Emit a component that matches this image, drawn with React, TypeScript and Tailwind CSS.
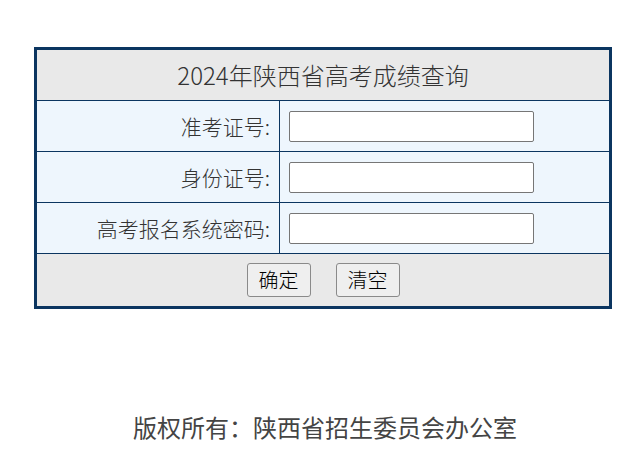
import React from "react";

export default function App() {
  /* ----- lomakkeen rivit ----- */
  const rivit = [
    { id: "zkzh", label: "准考证号:" },
    { id: "sfzh", label: "身份证号:" },
    { id: "mm", label: "高考报名系统密码:" },
  ];

  return (
    <div
      className="w-[640px] h-[475px] bg-white text-[#333]"
      style={{ fontFamily: '"Noto Sans CJK SC", "Noto Sans", sans-serif' }}
    >
      {/* ========== HAKULOMAKE ========== */}
      <div className="pt-[47px] pl-[34px]">
        <table className="w-[578px] border-collapse border-[3px] border-[#0b3560]">
          <tbody>
            {/* otsikko */}
            <tr className="h-[52px] bg-[#e9e9e9]">
              <td
                colSpan={2}
                className="border border-[#0b3560] text-center text-[24px] leading-none font-light"
              >
                2024年陕西省高考成绩查询
              </td>
            </tr>
            {rivit.map((r) => (
              <tr key={r.id} className="h-[51px] bg-[#eef6fd]">
                <td className="w-[244px] border border-[#0b3560] pr-[9px] text-right text-[21px] leading-none font-light">
                  {r.label}
                </td>
                <td className="border border-[#0b3560] pl-[9px]">
                  <input
                    type="text"
                    className="block w-[245px] h-[31px] bg-white border border-[#767676] rounded-[2px] outline-none"
                  />
                </td>
              </tr>
            ))}
            {/* painikkeet */}
            <tr className="h-[54px] bg-[#e9e9e9]">
              <td colSpan={2} className="border border-[#0b3560]">
                <div className="flex justify-center gap-[25px]">
                  <button className="w-[64px] h-[34px] bg-[#efefef] border border-[#8a8a8a] rounded-[3px] text-[20px] leading-none text-black font-light">
                    确定
                  </button>
                  <button className="w-[64px] h-[34px] bg-[#efefef] border border-[#8a8a8a] rounded-[3px] text-[20px] leading-none text-black font-light">
                    清空
                  </button>
                </div>
              </td>
            </tr>
          </tbody>
        </table>
      </div>

      {/* ========== ALATUNNISTE ========== */}
      <p className="mt-[106px] text-center text-[24px] leading-none text-[#444] pl-[10px]">
        版权所有：陕西省招生委员会办公室
      </p>
    </div>
  );
}
